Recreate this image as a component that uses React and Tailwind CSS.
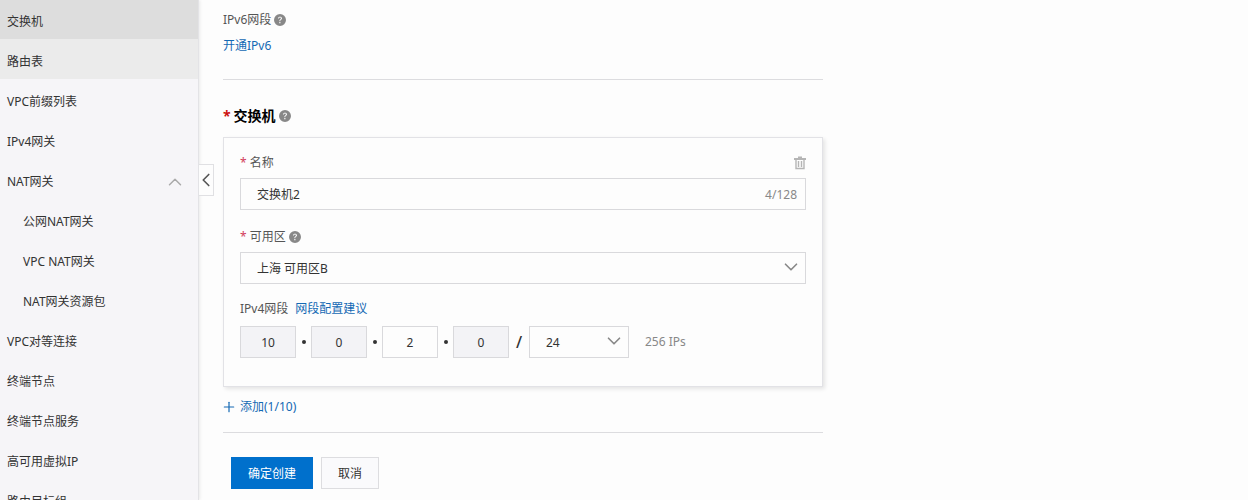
import { ChevronDown, ChevronLeft, ChevronUp, Plus } from 'lucide-react';
import { BsQuestionCircleFill } from 'react-icons/bs';
import clsx from 'clsx';

const navItems = [
  { label: '交换机', active: true },
  { label: '路由表', hovered: true },
  { label: 'VPC前缀列表' },
  { label: 'IPv4网关' },
  {
    label: 'NAT网关',
    children: ['公网NAT网关', 'VPC NAT网关', 'NAT网关资源包'],
  },
  { label: 'VPC对等连接' },
  { label: '终端节点' },
  { label: '终端节点服务' },
  { label: '高可用虚拟IP' },
  { label: '路由目标组' },
];

const octets = [
  { value: '10', locked: true },
  { value: '0', locked: true },
  { value: '2', locked: false },
  { value: '0', locked: true },
];

const Help = () => (
  <button type="button" aria-label="帮助" className="ml-[3px] text-[#888888]">
    <BsQuestionCircleFill className="size-3" />
  </button>
);

const TrashIcon = () => (
  <svg viewBox="0 0 12 14" className="h-3.5 w-3" fill="none" stroke="currentColor">
    <path d="M0 3h12M4 1.5h4" strokeWidth="2" />
    <path d="M2 3v9.5h8V3" strokeWidth="1.4" />
    <path d="M4.5 5v6M7.5 5v6" strokeWidth="1.4" />
  </svg>
);

const Select = ({ id, label, options, className }) => (
  <div className={clsx('relative', className)}>
    <select
      id={id}
      aria-label={label}
      className="block h-8 w-full appearance-none border border-[#d9d9dc] bg-[#fdfdfd] pl-4 pr-8 pt-0.5 text-[#333333] outline-none"
    >
      {options.map((option) => (
        <option key={option}>{option}</option>
      ))}
    </select>
    <ChevronDown className="pointer-events-none absolute right-1 top-1 size-5.5 text-[#888888]" strokeWidth={1.8} />
  </div>
);

const Sidebar = () => (
  <aside className="w-[199px] shrink-0 border-r border-[#e3e3e6] bg-[#f6f5f8] shadow-[1px_0_3px_rgba(0,0,0,0.08)]">
    <nav>
      <ul className="-mt-px text-[#333333]">
        {navItems.map((item) => (
          <li key={item.label}>
            <a
              href="#"
              className={clsx(
                'flex h-10 items-center justify-between pl-[7px] pr-3 pt-1.5',
                item.active && 'bg-[#dddddd]',
                item.hovered && 'bg-[#ebebeb]'
              )}
            >
              {item.label}
              {item.children && <ChevronUp className="size-5.5 text-[#aaaaaa]" strokeWidth={1.6} />}
            </a>
            {item.children && (
              <ul>
                {item.children.map((child) => (
                  <li key={child}>
                    <a href="#" className="flex h-10 items-center pl-[23px] pt-1.5">
                      {child}
                    </a>
                  </li>
                ))}
              </ul>
            )}
          </li>
        ))}
      </ul>
    </nav>
  </aside>
);

const SwitchCard = () => (
  <section className="mt-[11px] border border-[#e2e2e6] px-4 pb-7 pt-[15px] shadow-[2px_2px_4px_rgba(0,0,0,0.1)]">
    <div className="flex items-center justify-between">
      <label htmlFor="switch-name">
        <span className="mr-[3px] text-[#d23c5a]">*</span>名称
      </label>
      <button type="button" aria-label="删除" className="text-[#b5b5b5]">
        <TrashIcon />
      </button>
    </div>
    <div className="mt-[5px] flex h-8 items-center border border-[#d9d9dc] pl-4 pr-2 pt-0.5">
      <input
        id="switch-name"
        type="text"
        defaultValue="交换机2"
        maxLength={128}
        className="min-w-0 flex-1 bg-transparent text-[#333333] outline-none"
      />
      <span className="text-[#888888]">4/128</span>
    </div>

    <div className="mt-[17px] flex items-center">
      <label htmlFor="zone">
        <span className="mr-[3px] text-[#d23c5a]">*</span>可用区
      </label>
      <Help />
    </div>
    <Select id="zone" options={['上海 可用区B']} className="mt-[5px]" />

    <div className="mt-[15px] flex items-center gap-[7px]">
      <span>IPv4网段</span>
      <a href="#" className="text-[#1469b4]">
        网段配置建议
      </a>
    </div>
    <div className="mt-[7px] flex items-center">
      {octets.map((octet, i) => (
        <div key={i} className="flex items-center">
          {i > 0 && (
            <span className="flex w-[15px] justify-center">
              <span className="size-1 rounded-full bg-[#333333]" />
            </span>
          )}
          <input
            type="text"
            aria-label={`IPv4 ${i + 1}`}
            defaultValue={octet.value}
            disabled={octet.locked}
            className="h-8 w-14 border border-[#d9d9dc] bg-[#fdfdfd] text-center text-[#333333] outline-none disabled:bg-[#f3f3f6]"
          />
        </div>
      ))}
      <span className="w-5 text-center text-base font-medium text-[#333333]">/</span>
      <Select label="掩码" options={['24']} className="w-[100px]" />
      <span className="ml-4 text-[#888888]">256 IPs</span>
    </div>
  </section>
);

const App = () => (
  <div className="flex h-screen overflow-hidden bg-[#fdfdfd] font-['Noto_Sans','Noto_Sans_CJK_SC',sans-serif] text-xs leading-5 text-[#555555]">
    <Sidebar />
    <div className="relative min-w-0 flex-1 px-6 pt-2.5">
      <button
        type="button"
        aria-label="收起菜单"
        className="absolute left-0 top-[164px] flex h-8 w-[15px] items-center justify-center border border-l-0 border-[#e0e0e3] bg-[#fdfdfd] text-[#555555]"
      >
        <ChevronLeft className="size-5.5 shrink-0" strokeWidth={1.8} />
      </button>

      <main className="max-w-[600px]">
        <div className="flex items-center">
          <span>IPv6网段</span>
          <Help />
        </div>
        <a href="#" className="mt-1.5 block text-[#1469b4]">
          开通IPv6
        </a>
        <hr className="mt-[23px] border-[#dcdcdf]" />

        <div className="mt-[26px] flex items-center">
          <h2 className="text-sm leading-5 font-bold text-black">
            <span className="mr-[3px] text-[#cc1111]">*</span>交换机
          </h2>
          <Help />
        </div>

        <SwitchCard />

        <button type="button" className="mt-2.5 flex items-center gap-[3px] text-[#1469b4]">
          <Plus className="-ml-0.5 size-4" strokeWidth={1.8} />
          添加(1/10)
        </button>
        <hr className="mt-[15px] border-[#dcdcdf]" />

        <div className="mt-6 flex gap-2 pl-2">
          <button type="button" className="h-8 bg-[#0070cc] px-[17px] pt-0.5 text-white">
            确定创建
          </button>
          <button type="button" className="h-8 border border-[#dddde0] bg-[#fafafc] px-4 pt-0.5 text-[#333333]">
            取消
          </button>
        </div>
      </main>
    </div>
  </div>
);

export default App;
